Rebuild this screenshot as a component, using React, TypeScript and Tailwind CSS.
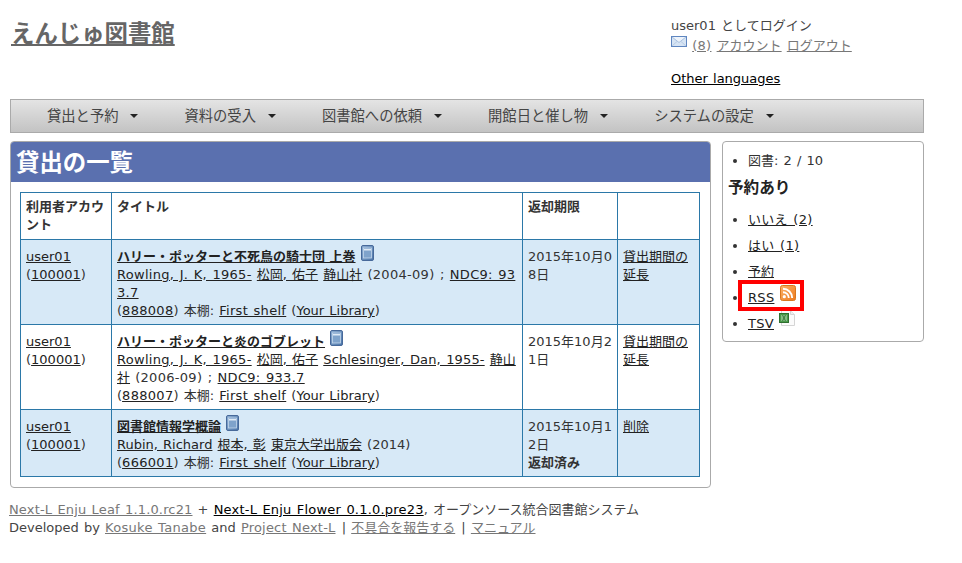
function Lnk({ children, gray, wide }: { children: React.ReactNode; gray?: boolean; wide?: boolean }) {
  return (
    <a href="#" className={`underline ${gray ? "text-[#777]" : "text-[#222]"} ${wide ? "tracking-[0.3px]" : ""}`}>
      {children}
    </a>
  );
}

function BookIcon() {
  return (
    <svg width="13" height="16" viewBox="0 0 13 16" className="inline-block align-baseline">
      <defs>
        <linearGradient id="bk" x1="0" y1="0" x2="1" y2="1">
          <stop offset="0" stopColor="#8fb0d4" />
          <stop offset="1" stopColor="#4a74a8" />
        </linearGradient>
      </defs>
      <rect x="0.5" y="0.5" width="12" height="15" rx="1.5" fill="url(#bk)" stroke="#47699a" />
      <rect x="2.5" y="3" width="8" height="10" fill="#7fa3cb" stroke="#c5d8ec" strokeWidth="0.8" />
      <rect x="3" y="4" width="7" height="1.5" fill="#dfeaf5" />
    </svg>
  );
}

function MailIcon() {
  return (
    <svg width="16" height="11" viewBox="0 0 16 11" className="inline-block align-baseline mb-[3px]">
      <rect x="0.5" y="0.5" width="15" height="10" fill="#d6e4f4" stroke="#5f86c0" />
      <path d="M1 1 L8 6.5 L15 1" fill="#eef4fb" stroke="#a9c1e0" />
      <path d="M1 10 L6 5.5 M15 10 L10 5.5" fill="none" stroke="#b7cbe4" />
    </svg>
  );
}

function RssIcon() {
  return (
    <svg width="16" height="16" viewBox="0 0 16 16" className="inline-block align-[1px] -mt-[5px]">
      <defs>
        <linearGradient id="rs" x1="0" y1="0" x2="1" y2="1">
          <stop offset="0" stopColor="#fbb36a" />
          <stop offset="1" stopColor="#ee7a1c" />
        </linearGradient>
      </defs>
      <rect x="0.5" y="0.5" width="15" height="15" rx="2" fill="url(#rs)" stroke="#d9771f" />
      <circle cx="4.3" cy="11.7" r="1.6" fill="#fff" />
      <path d="M3 7.2 A5.8 5.8 0 0 1 8.8 13 M3 3.8 A9.2 9.2 0 0 1 12.2 13" fill="none" stroke="#fff" strokeWidth="1.9" />
    </svg>
  );
}

function TsvIcon() {
  return (
    <svg width="16" height="16" viewBox="0 0 16 16" className="inline-block align-[2px] -mt-[6px]">
      <path d="M2.5 0.5 H11.5 L15.5 4.5 V15.5 H2.5 Z" fill="#fbfbfb" stroke="#d5d5d5" />
      <path d="M11.5 0.5 V4.5 H15.5" fill="#eee" stroke="#d5d5d5" />
      <rect x="0.5" y="3.5" width="9" height="9" fill="#4a9a4a" stroke="#2f6f2f" />
      <path d="M2 6 H8 M2 8 H8 M2 10 H8" stroke="#e2f2e2" strokeWidth="0.8" />
      <path d="M3.5 5 L6.5 11 M6.5 5 L3.5 11" stroke="#1f5f1f" strokeWidth="0.7" />
    </svg>
  );
}

function MenuItem({ label }: { label: string }) {
  return (
    <span className="flex items-center gap-[12px]">
      {label}
      <span className="w-0 h-0 border-x-[4px] border-x-transparent border-t-[4px] border-t-[#222]"></span>
    </span>
  );
}

function Shelf({ id }: { id: string }) {
  return (
    <>
      (<Lnk wide>{id}</Lnk>) 本棚: <Lnk wide>First shelf</Lnk> (<Lnk>Your Library</Lnk>)
    </>
  );
}

function UserCell() {
  return (
    <td className={tdClass}>
      <Lnk>user01</Lnk>
      <br />(<Lnk>100001</Lnk>)
    </td>
  );
}

const tdClass = "border border-[#2b78a8] px-[5px] pt-[5px] pb-[4px] align-baseline break-all";
const thClass = "border border-[#2b78a8] px-[5px] pt-[5px] pb-[5px] align-baseline text-left font-bold break-all";

export default function App() {
  return (
    <div
      className="w-[962px] h-[563px] bg-white text-[13px] leading-[18px] text-[#333] [word-spacing:1px] overflow-hidden"
      style={{ fontFamily: '"DejaVu Sans", "Noto Sans CJK JP", sans-serif' }}
    >
      <div className="w-[914px] ml-[10px]">
        <header className="flex h-[99px]">
          <div className="w-[661px] pt-[20px] pl-px">
            <h1 className="text-[23.4px] leading-[28px] font-bold">
              <a href="#" className="underline text-[#666]">えんじゅ図書館</a>
            </h1>
          </div>
          <div className="pt-[17px] text-[#444]">
            <div>user01 としてログイン</div>
            <div className="mt-[1px]">
              <MailIcon /> <Lnk gray wide>(8)</Lnk> <Lnk gray>アカウント</Lnk> <Lnk gray>ログアウト</Lnk>
            </div>
            <div className="mt-[15px]">
              <a href="#" className="underline text-black">Other languages</a>
            </div>
          </div>
        </header>

        <nav className="flex items-center gap-[46px] h-[34px] pl-[36px] border border-[#aaa] bg-gradient-to-b from-[#e4e4e4] to-[#c3c3c3] text-[14.3px] text-[#444]">
          <MenuItem label="貸出と予約" />
          <MenuItem label="資料の受入" />
          <MenuItem label="図書館への依頼" />
          <MenuItem label="開館日と催し物" />
          <MenuItem label="システムの設定" />
        </nav>

        <div className="flex items-start gap-[11px] mt-[8px]">
          <main className="w-[701px] h-[347px] border border-[#aaa] rounded-[4px] overflow-hidden">
            <h2 className="h-[40px] bg-[#5a70af] pl-[5px] text-[23.4px] leading-[43px] font-bold text-white">貸出の一覧</h2>
            <div className="px-[9px] pt-[10px]">
              <table className="w-[679px] table-fixed border-collapse">
                <colgroup>
                  <col className="w-[91px]" />
                  <col className="w-[411px]" />
                  <col className="w-[95px]" />
                  <col className="w-[82px]" />
                </colgroup>
                <thead>
                  <tr>
                    <th className={thClass}>利用者アカウント</th>
                    <th className={thClass}>タイトル</th>
                    <th className={thClass}>返却期限</th>
                    <th className={thClass}></th>
                  </tr>
                </thead>
                <tbody>
                  <tr className="bg-[#d7e9f7]">
                    <UserCell />
                    <td className={tdClass}>
                      <strong className="[word-spacing:0]"><Lnk>ハリー・ポッターと不死鳥の騎士団 上巻</Lnk></strong> <BookIcon />
                      <br />
                      <Lnk wide>Rowling, J. K, 1965-</Lnk> <Lnk>松岡, 佑子</Lnk> <Lnk>静山社</Lnk> <span className="tracking-[0.3px]">(2004-09) ;</span> <Lnk wide>NDC9: 933.7</Lnk>
                      <br />
                      <Shelf id="888008" />
                    </td>
                    <td className={tdClass}>2015年10月08日</td>
                    <td className={tdClass}><Lnk>貸出期間の延長</Lnk></td>
                  </tr>
                  <tr>
                    <UserCell />
                    <td className={tdClass}>
                      <strong className="[word-spacing:0]"><Lnk>ハリー・ポッターと炎のゴブレット</Lnk></strong> <BookIcon />
                      <br />
                      <Lnk wide>Rowling, J. K, 1965-</Lnk> <Lnk>松岡, 佑子</Lnk> <a href="#" className="underline text-[#222] tracking-[0.15px]">Schlesinger, Dan, 1955-</a> <Lnk>静山社</Lnk> <span className="tracking-[0.3px]">(2006-09) ;</span> <Lnk wide>NDC9: 933.7</Lnk>
                      <br />
                      <Shelf id="888007" />
                    </td>
                    <td className={tdClass}>2015年10月21日</td>
                    <td className={tdClass}><Lnk>貸出期間の延長</Lnk></td>
                  </tr>
                  <tr className="bg-[#d7e9f7]">
                    <UserCell />
                    <td className={tdClass}>
                      <strong className="[word-spacing:0]"><Lnk>図書館情報学概論</Lnk></strong> <BookIcon />
                      <br />
                      <Lnk>Rubin, Richard</Lnk> <Lnk>根本, 彰</Lnk> <Lnk>東京大学出版会</Lnk> (2014)
                      <br />
                      <Shelf id="666001" />
                    </td>
                    <td className={tdClass}>
                      2015年10月12日
                      <br />
                      <strong>返却済み</strong>
                    </td>
                    <td className={tdClass}><Lnk>削除</Lnk></td>
                  </tr>
                </tbody>
              </table>
            </div>
          </main>

          <aside className="w-[202px] h-[201px] border border-[#aaa] rounded-[4px] pt-[10px]">
            <ul className="list-disc pl-[25px]">
              <li>図書: 2 / 10</li>
            </ul>
            <h3 className="pl-[5px] mt-[8px] text-[15.6px] leading-[20px] font-bold text-[#222]">予約あり</h3>
            <ul className="list-disc pl-[25px] mt-[13px] flex flex-col gap-[8px]">
              <li><Lnk wide>いいえ (2)</Lnk></li>
              <li><Lnk wide>はい (1)</Lnk></li>
              <li><Lnk>予約</Lnk></li>
              <li className="relative">
                <Lnk wide>RSS</Lnk> <RssIcon />
                <span className="absolute left-[-10px] top-[-9px] w-[66px] h-[31px] border-[4px] border-[#f00]"></span>
              </li>
              <li>
                <Lnk wide>TSV</Lnk> <TsvIcon />
              </li>
            </ul>
          </aside>
        </div>

        <footer className="mt-[13px] ml-[-1px] text-[#444]">
          <div>
            <a href="#" className="underline text-[#777] tracking-[0.15px]">Next-L Enju Leaf 1.1.0.rc21</a> + <a href="#" className="underline text-black tracking-[0.2px]">Next-L Enju Flower 0.1.0.pre23</a>, オープンソース統合図書館システム
          </div>
          <div>
            Developed by <Lnk gray wide>Kosuke Tanabe</Lnk> and <a href="#" className="underline text-[#777] tracking-[0.2px]">Project Next-L</a> <span className="ml-px">|</span> <Lnk gray>不具合を報告する</Lnk> <span className="ml-px">|</span> <Lnk gray>マニュアル</Lnk>
          </div>
        </footer>
      </div>
    </div>
  );
}
